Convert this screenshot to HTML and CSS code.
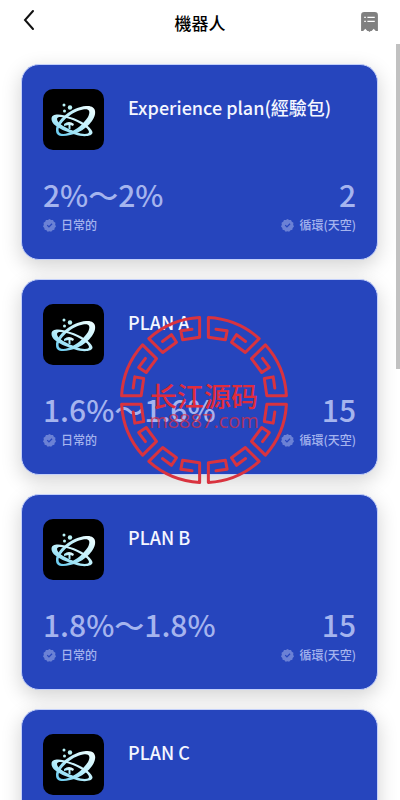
FILE: index.html
```html
<!DOCTYPE html>
<html lang="zh-Hant">
<head>
<meta charset="utf-8">
<meta name="viewport" content="width=device-width, initial-scale=1">
<title>機器人</title>
<link rel="stylesheet" href="styles.css">
</head>
<body>
<svg class="sprite" aria-hidden="true">
  <defs>
    <linearGradient id="glow" x1="0" y1="1" x2="1" y2="0">
      <stop offset="0" stop-color="#62c8ee"/>
      <stop offset=".45" stop-color="#b4ecfa"/>
      <stop offset="1" stop-color="#f4ffff"/>
    </linearGradient>
    <symbol id="logo" viewBox="0 0 61 61">
      <rect width="61" height="61" fill="#000"/>
      <g fill="url(#glow)" fill-rule="evenodd">
        <path d="M13 41C13 31 29 18 43 17C54 16 54 25 49 32C42 42 29 47 20 47C15 47 13 45 13 41ZM15.500 41C15.500 45 20 46 25 44C34 41 41 34 45 28C48 22 46 19.500 40 20.500C30 22 16.500 33 15.500 41Z"/>
        <path d="M8.500 30C8.500 24 18 25 27 28C38 31 48 38 49.500 43C50 48 39 48 32 45.500C21 42 8.500 37 8.500 30ZM14 30C14 34.500 24 39.500 33 43C39 45.500 46 45.500 46 43C46 39 36 33 27 30C20 27.500 14 27 14 30Z"/>
        <path d="M21 35Q26 31 31 35L30 37L27.500 36V40H25.500V36L21 37Z"/>
      </g>
      <g fill="#b9f2f5"><circle cx="21" cy="16" r="1.5"/><circle cx="27" cy="18.500" r="2.200"/><circle cx="21.500" cy="22" r="1.500"/></g>
    </symbol>
    <symbol id="verified" viewBox="0 0 24 24">
      <path fill-rule="evenodd" d="M12 0L15 2L18.500 1.700L20 5L23 7L22.500 10.500L24 14L21.500 16.500L21 20L17.500 20.700L15 23.500L12 22.500L8.500 23.500L6.500 20.700L3 20L2.500 16.500L0 14L1.500 10.500L1 7L4 5L5.500 1.700L9 2ZM7 12L11 16L17.500 9.500L16 8L11 13L8.500 10.500Z"/>
    </symbol>
    <path id="fret" d="M-16-70L-5.100-72.800L-3.300-63.900L-20-59.700L-27.500-77.800A82.500 82.500 0 0 1 27.500-77.800L20-59.700L3.300-63.900L5.100-72.800L16-70"/>
  </defs>
</svg>

<div class="app">
  <header class="bar">
    <button class="bar-button" type="button" aria-label="返回">
      <svg class="back" viewBox="0 0 12 24"><path d="M10 3L2 12L10 21"/></svg>
    </button>
    <h1 class="bar-title">機器人</h1>
    <button class="bar-button bar-button-end" type="button" aria-label="記錄">
      <svg class="record" viewBox="0 0 16 19"><path fill="#808080" d="M3 0H13Q16 0 16 3V18H14L12 16L10 18H9L8 19L7 18H6L4 16L2 18H0V3Q0 0 3 0Z"/><path stroke="#fff" stroke-width="1.200" d="M3 5H4.500M6 5H13M3 9H4.500M6 9H13"/></svg>
    </button>
  </header>

  <main class="list">
    <article class="card">
      <div class="card-head"><svg class="logo"><use href="#logo"/></svg><h2 class="name">Experience plan(經驗包)</h2></div>
      <dl class="stats">
        <div class="stat"><dt class="label"><svg class="tick"><use href="#verified"/></svg>日常的</dt><dd class="value">2%〜2%</dd></div>
        <div class="stat stat-end"><dt class="label"><svg class="tick"><use href="#verified"/></svg>循環(天空)</dt><dd class="value">2</dd></div>
      </dl>
    </article>
    <article class="card">
      <div class="card-head"><svg class="logo"><use href="#logo"/></svg><h2 class="name">PLAN A</h2></div>
      <dl class="stats">
        <div class="stat"><dt class="label"><svg class="tick"><use href="#verified"/></svg>日常的</dt><dd class="value">1.6%〜1.6%</dd></div>
        <div class="stat stat-end"><dt class="label"><svg class="tick"><use href="#verified"/></svg>循環(天空)</dt><dd class="value">15</dd></div>
      </dl>
    </article>
    <article class="card">
      <div class="card-head"><svg class="logo"><use href="#logo"/></svg><h2 class="name">PLAN B</h2></div>
      <dl class="stats">
        <div class="stat"><dt class="label"><svg class="tick"><use href="#verified"/></svg>日常的</dt><dd class="value">1.8%〜1.8%</dd></div>
        <div class="stat stat-end"><dt class="label"><svg class="tick"><use href="#verified"/></svg>循環(天空)</dt><dd class="value">15</dd></div>
      </dl>
    </article>
    <article class="card">
      <div class="card-head"><svg class="logo"><use href="#logo"/></svg><h2 class="name">PLAN C</h2></div>
    </article>
  </main>
  <div class="scroll-track"><div class="scroll-thumb"></div></div>

  <div class="watermark">
    <svg class="ring" viewBox="-84 -84 168 168">
      <use href="#fret" transform="rotate(22.500)"/><use href="#fret" transform="rotate(67.500)"/>
      <use href="#fret" transform="rotate(112.500)"/><use href="#fret" transform="rotate(157.500)"/>
      <use href="#fret" transform="rotate(202.500)"/><use href="#fret" transform="rotate(247.500)"/>
      <use href="#fret" transform="rotate(292.500)"/><use href="#fret" transform="rotate(337.500)"/>
    </svg>
    <div class="mark-text"><span class="mark-name">长江源码</span><span class="mark-site">m8887.com</span></div>
  </div>
</div>
</body>
</html>
```
FILE: styles.css
```css
* { box-sizing: border-box; }

body {
  margin: 0;
  background: #fff;
  color: #000;
  font-family: "Noto Sans CJK SC", "Noto Sans", sans-serif;
}

h1, h2, dl, dd { margin: 0; font-weight: 500; }

.sprite { position: absolute; width: 0; height: 0; }

.app {
  position: relative;
  display: flex;
  flex-direction: column;
  height: 100vh;
}

.bar {
  display: grid;
  grid-template-columns: 1fr auto 1fr;
  align-items: center;
  flex: none;
  height: 44px;
  padding: 0 22px;
}

.bar-button {
  display: flex;
  justify-self: start;
  padding: 0 0 4px;
  border: 0;
  background: none;
}
.bar-button-end { justify-self: end; padding: 0; }
.back {
  width: 14px;
  height: 24px;
  fill: none;
  stroke: #111;
  stroke-width: 2;
  stroke-linecap: round;
}
.record { width: 17px; height: 20px; }
.bar-title { font-size: 17px; line-height: 24px; padding-top: 2px; }

.list {
  display: flex;
  flex: 1;
  flex-direction: column;
  gap: 19px;
  min-height: 0;
  padding: 20px 22px 20px 21px;
  overflow-y: auto;
  scrollbar-width: none;
}

.card {
  display: flex;
  flex: none;
  flex-direction: column;
  gap: 22px;
  min-height: 196px;
  padding: 24px 21px 20px;
  border: 1px solid #c3d0fa;
  border-radius: 18px;
  background: #2645bd;
  box-shadow: 0 6px 20px rgba(0, 0, 0, .18);
}

.card-head { display: flex; gap: 24px; }
.logo { width: 61px; height: 61px; border-radius: 10px; }
.name { color: #f4f6ff; font-size: 18px; line-height: 36px; }

.stats {
  display: flex;
  justify-content: space-between;
  color: #a5b4ee;
}
.stat { display: flex; flex-direction: column-reverse; }
.stat-end { align-items: flex-end; }
.value { font-size: 30px; line-height: 44px; }
.label {
  display: flex;
  align-items: center;
  gap: 5px;
  font-size: 12px;
  font-weight: 500;
  line-height: 18px;
}
.tick { width: 13px; height: 13px; fill: #6b81d5; }

.scroll-track {
  position: absolute;
  top: 44px;
  right: 0;
  bottom: 0;
  width: 4px;
}
.scroll-thumb { height: 43%; background: #c1c1c1; }

.watermark {
  position: absolute;
  top: 50%;
  left: 51%;
  display: grid;
  place-items: center;
  transform: translate(-50%, -50%);
  color: #e02c3c;
  pointer-events: none;
}
.watermark > * { grid-area: 1 / 1; }
.ring {
  width: 168px;
  height: 168px;
  fill: none;
  stroke: #d9333f;
  stroke-width: 3;
  stroke-linejoin: round;
  stroke-linecap: round;
}
.mark-text {
  display: flex;
  flex-direction: column;
  align-items: center;
  padding-top: 12px;
}
.mark-name { font-size: 27px; font-weight: 500; line-height: 30px; }
.mark-site { font-family: "Open Sans", sans-serif; font-size: 20px; line-height: 20px; opacity: .7; }
```
